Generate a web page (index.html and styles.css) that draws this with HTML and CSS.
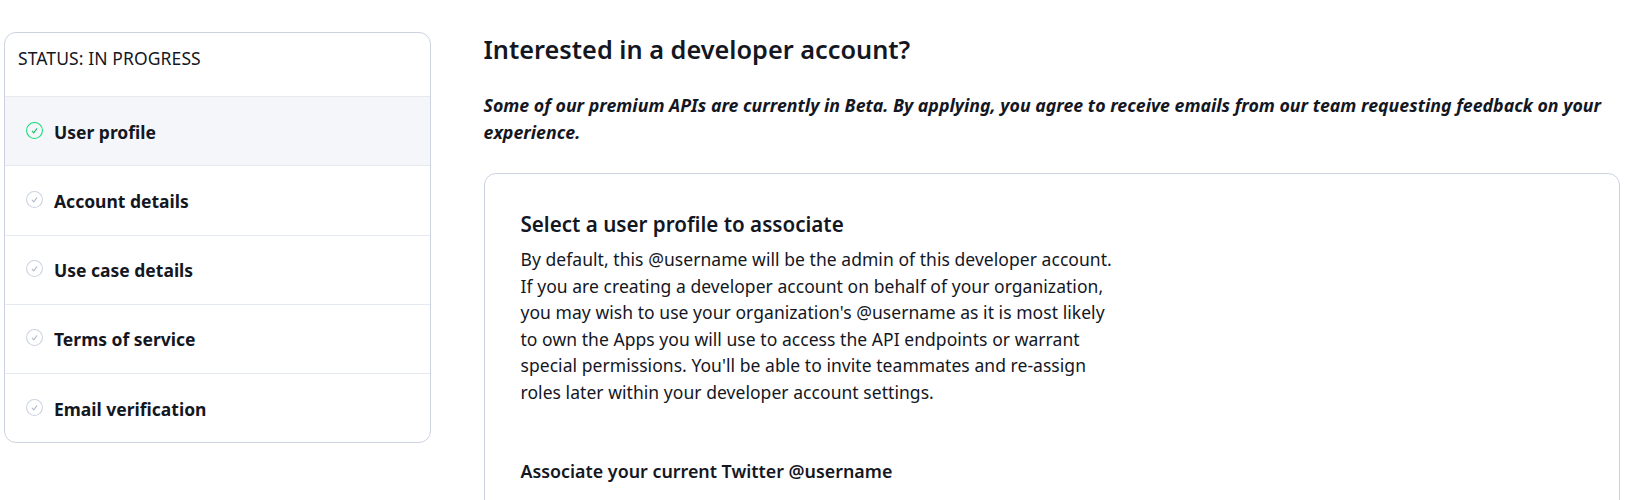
FILE: index.html
```html
<!DOCTYPE html>
<html lang="en">
<head>
<meta charset="utf-8">
<title>Developer account</title>
<link rel="stylesheet" href="styles.css">
</head>
<body>
<div class="page">
  <aside class="steps">
    <div class="status">STATUS: IN PROGRESS</div>
    <div class="step active"><svg class="check" viewBox="0 0 16 16"><circle cx="8" cy="8" r="7.5"/><path d="M5.6 8.4l1.7 1.8 3.1-4.2"/></svg><span>User profile</span></div>
    <div class="step"><svg class="check" viewBox="0 0 16 16"><circle cx="8" cy="8" r="7.5"/><path d="M5.6 8.4l1.7 1.8 3.1-4.2"/></svg><span>Account details</span></div>
    <div class="step"><svg class="check" viewBox="0 0 16 16"><circle cx="8" cy="8" r="7.5"/><path d="M5.6 8.4l1.7 1.8 3.1-4.2"/></svg><span>Use case details</span></div>
    <div class="step"><svg class="check" viewBox="0 0 16 16"><circle cx="8" cy="8" r="7.5"/><path d="M5.6 8.4l1.7 1.8 3.1-4.2"/></svg><span>Terms of service</span></div>
    <div class="step"><svg class="check" viewBox="0 0 16 16"><circle cx="8" cy="8" r="7.5"/><path d="M5.6 8.4l1.7 1.8 3.1-4.2"/></svg><span>Email verification</span></div>
  </aside>
  <main class="main">
    <h1 class="title">Interested in a developer account?</h1>
    <p class="lead">Some of our premium APIs are currently in Beta. By applying, you agree to receive emails from our team requesting feedback on your experience.</p>
    <section class="card">
      <h2 class="card-title">Select a user profile to associate</h2>
      <p class="card-text">By default, this @username will be the admin of this developer account.<br>If you are creating a developer account on behalf of your organization,<br>you may wish to use your organization's @username as it is most likely<br>to own the Apps you will use to access the API endpoints or warrant<br>special permissions. You'll be able to invite teammates and re-assign<br>roles later within your developer account settings.</p>
      <h3 class="card-sub">Associate your current Twitter @username</h3>
    </section>
  </main>
</div>
</body>
</html>
```
FILE: styles.css
```css
* { box-sizing: border-box; }
html, body { height: 500px; overflow: hidden; }
body { margin: 0; background: #fff; color: #14171f; font-family: "Noto Sans", "Open Sans", sans-serif; }
.page { display: flex; align-items: flex-start; padding: 32px 5px 0 4px; gap: 52.5px; }
.steps { flex: 0 0 427px; height: 411px; border: 1px solid #ccd3df; border-radius: 12px; overflow: hidden; }
.status { height: 63px; padding: 13px 13px 0; font-size: 17.5px; line-height: 24px; letter-spacing: 0.1px; }
.step { display: flex; align-items: center; height: 69.25px; padding: 1px 0 0 21px; border-top: 1px solid #e5e9f0; font-size: 17.5px; font-weight: 700; }
.step.active { background: #f5f6fa; }
.check { width: 17px; height: 17px; margin-right: 11px; margin-bottom: 3px; fill: none; stroke: #ccd3df; stroke-width: 1; }
.check path { stroke: #b3bac7; }
.active .check circle { stroke: #1bd97b; }
.active .check path { stroke: #17bf63; }
.main { flex: 1; min-width: 0; }
.title { margin: 0; font-size: 25.3px; line-height: 34px; font-weight: 600; }
.lead { margin: 26px 0 0; font-size: 17.75px; line-height: 27px; font-weight: 700; font-style: italic; }
.card { margin-top: 27px; height: 340px; padding: 37px 36px; border: 1px solid #ccd3df; border-radius: 12px; }
.card-title { margin: 0; font-size: 20.6px; line-height: 26px; font-weight: 600; }
.card-text { margin: 9px 0 0; font-size: 17.5px; line-height: 26.5px; letter-spacing: 0.05px; }
.card-sub { margin: 54px 0 0; font-size: 17.85px; line-height: 24px; font-weight: 600; }
```
